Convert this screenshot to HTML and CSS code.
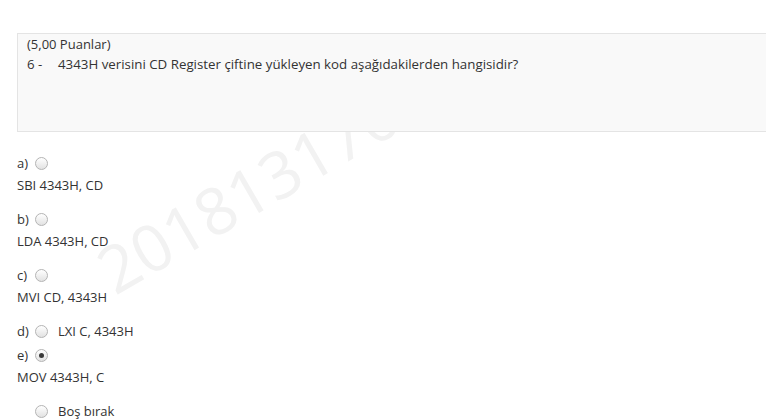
FILE: index.html
```html
<!DOCTYPE html>
<html lang="tr">
<head>
<meta charset="utf-8">
<link rel="stylesheet" href="styles.css">
</head>
<body>
<div class="page">
  <div class="watermark">201813170</div>
  <div class="question">
    <div class="points">(5,00 Puanlar)</div>
    <div class="qline"><span class="qnum">6 -</span><span>4343H verisini CD Register çiftine yükleyen kod aşağıdakilerden hangisidir?</span></div>
  </div>
  <div class="options">
    <div class="opt">
      <div class="head"><span class="lbl">a)</span><span class="radio"></span></div>
      <div class="ans">SBI 4343H, CD</div>
    </div>
    <div class="opt">
      <div class="head"><span class="lbl">b)</span><span class="radio"></span></div>
      <div class="ans">LDA 4343H, CD</div>
    </div>
    <div class="opt">
      <div class="head"><span class="lbl">c)</span><span class="radio"></span></div>
      <div class="ans">MVI CD, 4343H</div>
    </div>
    <div class="opt inline">
      <div class="head"><span class="lbl">d)</span><span class="radio"></span><span class="txt">LXI C, 4343H</span></div>
    </div>
    <div class="opt">
      <div class="head"><span class="lbl">e)</span><span class="radio checked"></span></div>
      <div class="ans">MOV 4343H, C</div>
    </div>
    <div class="opt">
      <div class="head"><span class="lbl"></span><span class="radio"></span><span class="txt">Boş bırak</span></div>
    </div>
  </div>
</div>
</body>
</html>
```
FILE: styles.css
```css
html, body {
  margin: 0;
  padding: 0;
  background: #fff;
}
body {
  font-family: "Open Sans", "Liberation Sans", sans-serif;
  font-size: 13px;
  color: #333;
  overflow: hidden;
}
.page {
  position: relative;
  padding: 33px 0 0 17px;
  height: 420px;
  box-sizing: border-box;
}
.watermark {
  position: absolute;
  left: 119px;
  top: 238px;
  font-size: 65px;
  line-height: 1;
  color: #f2f2f2;
  transform: rotate(-30deg);
  transform-origin: left bottom;
  white-space: nowrap;
  z-index: 0;
}
.question {
  position: relative;
  z-index: 1;
  background: #f9f9f9;
  border: 1px solid #e4e4e4;
  border-right: none;
  height: 97px;
  padding: 0 0 0 9px;
  line-height: 20px;
}
.qline {
  font-size: 13.3px;
}
.qnum {
  display: inline-block;
  width: 31px;
}
.options {
  position: relative;
  z-index: 1;
  margin-top: 20px;
  line-height: 22px;
}
.opt {
  margin-bottom: 12px;
}
.head {
  display: flex;
  align-items: center;
  height: 22px;
}
.lbl {
  display: inline-block;
  width: 18px;
}
.radio {
  box-sizing: border-box;
  width: 13px;
  height: 13px;
  border-radius: 50%;
  border: 1px solid #b4b4b4;
  background: linear-gradient(#ffffff, #e2e2e2);
  margin-right: 10px;
  position: relative;
  flex: none;
}
.radio.checked::after {
  content: "";
  position: absolute;
  left: 3px;
  top: 3px;
  width: 5px;
  height: 5px;
  border-radius: 50%;
  background: #3a3a3a;
}
.ans {
  height: 22px;
}
.opt.inline {
  margin-top: 2px;
  margin-bottom: 2px;
}
```
